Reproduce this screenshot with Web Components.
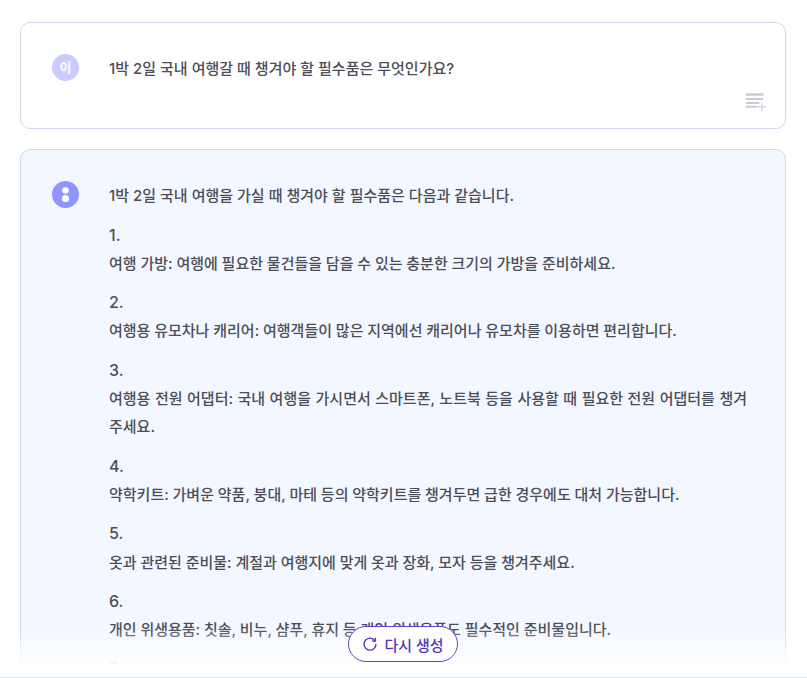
<!DOCTYPE html>
<html lang="ko">
<head>
<meta charset="utf-8">
<title>chat</title>
<style>
  html, body { margin: 0; height: 100%; background: #fff; overflow: hidden; }
  body { font-family: Inter, "Noto Sans CJK KR", sans-serif; }
</style>
</head>
<body>
<template id="chat-view-tpl">
  <style>
    :host { display: block; position: relative; height: 678px; overflow: hidden; box-sizing: border-box; border-bottom: 1px solid #dfe2ee; }
    .list { display: flex; flex-direction: column; gap: 20px; padding: 22px 21px 0 20px; }
    .fade { position: absolute; left: 0; right: 0; bottom: 0; height: 49px; background: linear-gradient(rgba(255,255,255,0), #fff 78%); }
    .action { position: absolute; left: 348px; top: 626px; }
  </style>
  <div class="list"><slot></slot></div>
  <div class="fade"></div>
  <div class="action"><slot name="action"></slot></div>
</template>

<template id="chat-message-tpl">
  <style>
    :host { display: block; position: relative; box-sizing: border-box; border: 1px solid #d0d8ec; border-radius: 10px; background: #fff; color: #4c4e57; padding: 30px 38px 45px 31px; font-size: 15px; line-height: 28.3px; font-weight: 500; text-align: justify; }
    :host([answer]) { background: #f3f7ff; padding-bottom: 40px; }
    .row { display: grid; grid-template-columns: 27px 1fr; column-gap: 30px; }
    .avatar { width: 27px; height: 27px; border-radius: 50%; background: #cbcbff; color: #fff; display: flex; align-items: center; justify-content: center; font-size: 13px; font-weight: 700; line-height: 1; margin-top: 1px; }
    :host([answer]) .avatar { background: #8f94ff; }
    .body { padding-top: 2px; }
    .tool { position: absolute; right: 19px; bottom: 17px; width: 21px; height: 18px; display: none; }
    :host(:not([answer])) .tool { display: block; }
  </style>
  <div class="row">
    <div class="avatar"><slot name="avatar"></slot></div>
    <div class="body"><slot></slot></div>
  </div>
  <svg class="tool" viewBox="0 0 21 18" aria-hidden="true">
    <path fill="#c9ccd6" d="M.7.300h17.600v2.400H.7zM.7 5h17.600v2H.7zM.7 9h13.600v2H.7zM.7 12.700h11.300v2H.7z"/>
    <path fill="#d3d6de" d="M16 10h1.500v3h3.500v1.500h-3.500V18H16v-3.500h-3V13h3z"/>
  </svg>
</template>

<template id="answer-item-tpl">
  <style>
    :host { display: block; margin-top: 11px; word-spacing: -0.18px; }
    .num { display: block; font-size: 16px; line-height: 27px; margin-bottom: 1.3px; }
  </style>
  <span class="num"><slot name="num"></slot></span>
  <slot></slot>
</template>

<template id="regen-button-tpl">
  <style>
    :host { display: inline-flex; align-items: center; gap: 6px; box-sizing: border-box; width: 110px; height: 36px; justify-content: center; border: 1px solid #6a3fd6; border-radius: 18px; background: #fff; color: #5433c4; font-size: 15px; font-weight: 500; }
    svg { width: 16px; height: 16px; }
  </style>
  <svg viewBox="0 0 16 16" fill="none" stroke="#5a34c8" stroke-width="1.400" aria-hidden="true">
    <path d="M13 4.800A6 6 0 1 0 14 8"/>
    <path d="M13.400 1.800v3.400H10" stroke-width="1.300"/>
  </svg>
  <slot></slot>
</template>

<chat-view>
  <chat-message>
    <span slot="avatar">이</span>
    1박 2일 국내 여행갈 때 챙겨야 할 필수품은 무엇인가요?
  </chat-message>
  <chat-message answer>
    <svg slot="avatar" width="27" height="27" viewBox="0 0 27 27" style="display:block" aria-hidden="true"><circle cx="13.500" cy="9.500" r="3.300" fill="#fff"/><circle cx="13.500" cy="17.500" r="3.600" fill="#fff"/></svg>
    1박 2일 국내 여행을 가실 때 챙겨야 할 필수품은 다음과 같습니다.
    <answer-item><span slot="num">1.</span>여행 가방: 여행에 필요한 물건들을 담을 수 있는 충분한 크기의 가방을 준비하세요.</answer-item>
    <answer-item><span slot="num">2.</span>여행용 유모차나 캐리어: 여행객들이 많은 지역에선 캐리어나 유모차를 이용하면 편리합니다.</answer-item>
    <answer-item><span slot="num">3.</span>여행용 전원 어댑터: 국내 여행을 가시면서 스마트폰, 노트북 등을 사용할 때 필요한 전원 어댑터를 챙겨주세요.</answer-item>
    <answer-item><span slot="num">4.</span>약학키트: 가벼운 약품, 붕대, 마테 등의 약학키트를 챙겨두면 급한 경우에도 대처 가능합니다.</answer-item>
    <answer-item><span slot="num">5.</span>옷과 관련된 준비물: 계절과 여행지에 맞게 옷과 장화, 모자 등을 챙겨주세요.</answer-item>
    <answer-item><span slot="num">6.</span>개인 위생용품: 칫솔, 비누, 샴푸, 휴지 등 개인 위생용품도 필수적인 준비물입니다.</answer-item>
    <answer-item><span slot="num">7.</span></answer-item>
  </chat-message>
  <regen-button slot="action">다시 생성</regen-button>
</chat-view>

<script>
  // every element just clones its template into an open shadow root
  ['chat-view', 'chat-message', 'answer-item', 'regen-button'].forEach(function (name) {
    customElements.define(name, class extends HTMLElement {
      constructor() {
        super();
        const shadowRoot = this.attachShadow({mode: 'open'});
        shadowRoot.appendChild(document.getElementById(name + '-tpl').content.cloneNode(true));
      }
    });
  });
</script>
</body>
</html>
